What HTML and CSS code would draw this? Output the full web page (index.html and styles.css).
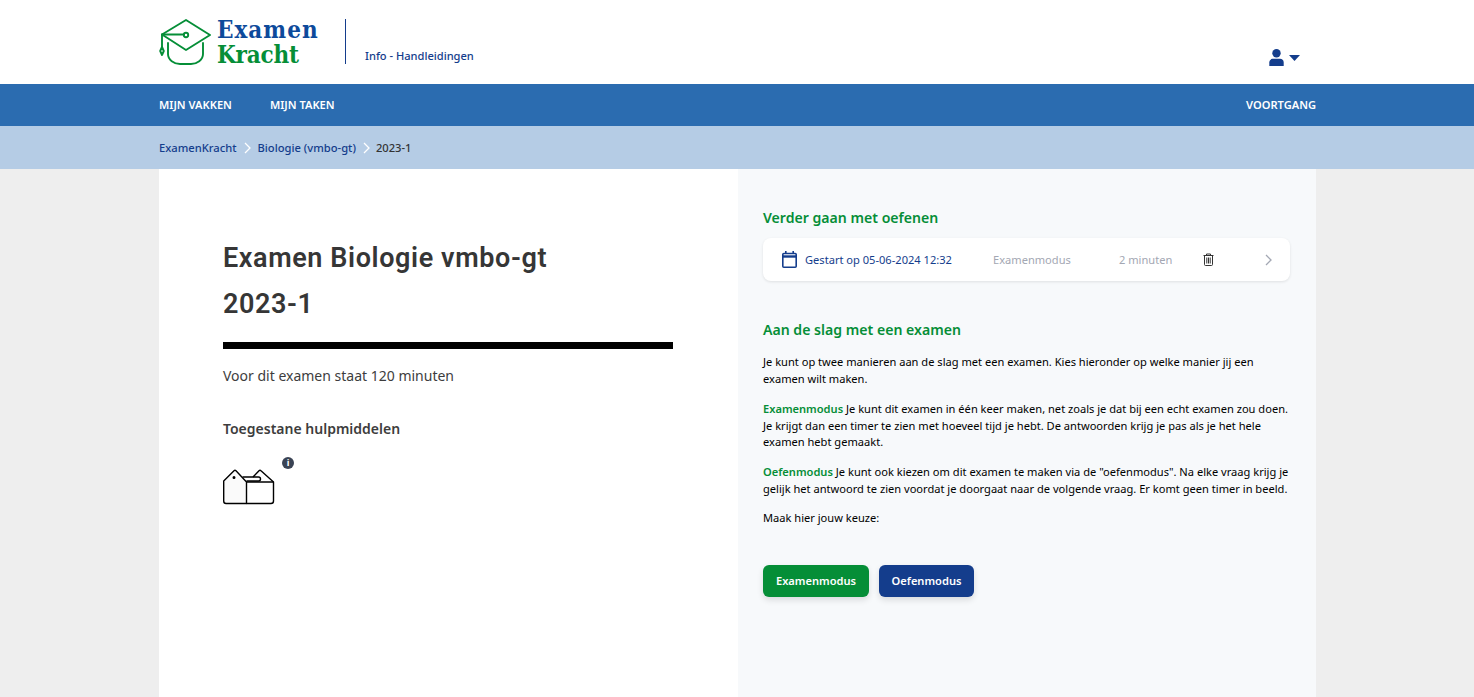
FILE: index.html
```html
<!DOCTYPE html>
<html lang="nl">
<head>
  <meta charset="UTF-8" />
  <meta name="viewport" content="width=device-width, initial-scale=1.0"/>
  <title>ExamenKracht</title>
  <link rel="stylesheet" href="styles.css">
</head>
<body>

  <!-- HEADER -->
  <header class="header">
    <div class="wrap header-inner">
      <a class="logo" href="#">
        <svg class="logo-cap" viewBox="0 0 52 46" width="52" height="46" fill="none" stroke="#058e37" stroke-width="1.900" stroke-linejoin="round" stroke-linecap="round">
          <path d="M27 1 L51 16 L27 31 L3 15.500 Z"/>
          <path d="M3 15.500 H25"/>
          <circle cx="27" cy="16" r="2.200"/>
          <path d="M9 24 V35 C9 41 15 45 21 45 H32 C38 45 44 41 44 35 V24"/>
          <path d="M3 15.500 V28"/>
          <path d="M3 28 L1.200 32 L3 36 L4.800 32 Z"/>
        </svg>
        <span class="logo-text"><span class="logo-top">Examen</span><span class="logo-bottom">Kracht</span></span>
      </a>
      <div class="header-divider"></div>
      <a class="header-link" href="#">Info - Handleidingen</a>
      <div class="user-menu">
        <svg viewBox="0 0 15 17" width="15" height="17" fill="#143d8c">
          <circle cx="7.500" cy="4.300" r="4.200"/>
          <path d="M0.300 17 V13.500 C0.300 11 2 9.800 4 9.800 H11 C13 9.800 14.700 11 14.700 13.500 V17 Z"/>
        </svg>
        <svg viewBox="0 0 11 6" width="11" height="6" fill="#143d8c"><path d="M0 0 H11 L5.500 6 Z"/></svg>
      </div>
    </div>
  </header>

  <!-- NAVIGATION -->
  <nav class="navbar">
    <div class="wrap navbar-inner">
      <a href="#">MIJN VAKKEN</a>
      <a href="#">MIJN TAKEN</a>
      <a class="navbar-right" href="#">VOORTGANG</a>
    </div>
  </nav>

  <!-- BREADCRUMB -->
  <div class="breadcrumb">
    <div class="wrap breadcrumb-inner">
      <a href="#">ExamenKracht</a>
      <svg class="crumb-sep" viewBox="0 0 7 12" width="7" height="12"><path d="M1 1 L6 6 L1 11" fill="none" stroke="#fff" stroke-width="1.300"/></svg>
      <a href="#">Biologie (vmbo-gt)</a>
      <svg class="crumb-sep" viewBox="0 0 7 12" width="7" height="12"><path d="M1 1 L6 6 L1 11" fill="none" stroke="#fff" stroke-width="1.300"/></svg>
      <span>2023-1</span>
    </div>
  </div>

  <!-- MAIN -->
  <main class="wrap content">
    <section class="left">
      <h1>Examen Biologie vmbo-gt<br>2023-1</h1>
      <div class="rule"></div>
      <p class="duration">Voor dit examen staat 120 minuten</p>
      <h2 class="tools-title">Toegestane hulpmiddelen</h2>
      <div class="tools">
        <svg viewBox="0 0 52 36" width="52" height="36" fill="none" stroke="#000" stroke-width="1.400" stroke-linejoin="round">
          <path d="M0.700 12 L11 1.800 Q12 0.800 13 1.800 L23.500 13 V34.500 H3 Q0.700 34.500 0.700 32 Z" fill="#fafafa"/>
          <path d="M23.500 13 H50.500 V32 Q50.500 34.500 48 34.500 H23.500"/>
          <path d="M30 8 L36 1.800 Q37 0.800 38 1.800 L50.500 13"/>
          <path d="M19.500 8 H35.500 Q37.500 8 37.500 10 Q37.500 12 35.500 12 H23.500"/>
          <circle cx="11" cy="8.500" r="0.800" fill="#000"/>
        </svg>
        <span class="info-dot">i</span>
      </div>
    </section>

    <section class="right">
      <h3>Verder gaan met oefenen</h3>
      <div class="session">
        <svg class="session-cal" viewBox="0 0 15 17" width="15" height="17" fill="none" stroke="#143d8c" stroke-width="1.600">
          <rect x="0.800" y="2.500" width="13.400" height="13.700" rx="1"/>
          <path d="M0.800 5.500 H14.200" stroke-width="2.400"/>
          <path d="M3.800 0 V3 M11.200 0 V3"/>
        </svg>
        <span class="session-date">Gestart op 05-06-2024 12:32</span>
        <span class="session-mode">Examenmodus</span>
        <span class="session-time">2 minuten</span>
        <svg class="session-trash" viewBox="0 0 11 13" width="11" height="13" fill="none" stroke="#333" stroke-width="1">
          <path d="M0.500 2.500 H10.500 M3.500 2.500 V1 H7.500 V2.500"/>
          <path d="M1.500 2.500 V11.500 Q1.500 12.500 2.500 12.500 H8.500 Q9.500 12.500 9.500 11.500 V2.500"/>
          <path d="M3.800 4.500 V10.500 M5.500 4.500 V10.500 M7.200 4.500 V10.500"/>
        </svg>
        <svg class="session-arrow" viewBox="0 0 7 12" width="7" height="12"><path d="M1 1 L6 6 L1 11" fill="none" stroke="#a3a7b3" stroke-width="1.300"/></svg>
      </div>

      <h3 class="start-title">Aan de slag met een examen</h3>
      <p>Je kunt op twee manieren aan de slag met een examen. Kies hieronder op welke manier jij een examen wilt maken.</p>
      <p><strong>Examenmodus</strong> Je kunt dit examen in één keer maken, net zoals je dat bij een echt examen zou doen. Je krijgt dan een timer te zien met hoeveel tijd je hebt. De antwoorden krijg je pas als je het hele examen hebt gemaakt.</p>
      <p class="practice"><strong>Oefenmodus</strong> Je kunt ook kiezen om dit examen te maken via de "oefenmodus". Na elke vraag krijg je gelijk het antwoord te zien voordat je doorgaat naar de volgende vraag. Er komt geen timer in beeld.</p>
      <p class="choice">Maak hier jouw keuze:</p>
      <div class="buttons">
        <button class="btn btn-green">Examenmodus</button>
        <button class="btn btn-blue">Oefenmodus</button>
      </div>
    </section>
  </main>

</body>
</html>
```

FILE: styles.css
```css
html, body {
  height: 100%;
}

body {
  margin: 0;
  background-color: #eeeeee;
  font-family: "Noto Sans", "Open Sans", sans-serif;
  color: #000;
  overflow: hidden;
  display: flex;
  flex-direction: column;
}

a {
  text-decoration: none;
  color: inherit;
}

.wrap {
  width: 1157px;
  margin-left: 159px;
}

/* HEADER */
.header {
  background-color: #fff;
  height: 84px;
  flex: none;
}

.header-inner {
  display: flex;
  height: 100%;
}

.logo {
  display: flex;
  align-items: flex-start;
  gap: 6px;
  padding-top: 17px;
  width: 186px;
}

.logo-cap {
  margin-top: 2px;
}

.logo-text {
  display: flex;
  flex-direction: column;
  font-family: "DejaVu Serif Condensed", "DejaVu Serif", serif;
  font-stretch: condensed;
  font-weight: 700;
  font-size: 24px;
  line-height: 25px;
}

.logo-top {
  color: #0d4a9b;
  letter-spacing: 1px;
}

.logo-bottom {
  color: #058e37;
  letter-spacing: -0.2px;
}

.header-divider {
  width: 1px;
  height: 45px;
  margin-top: 19px;
  background-color: #143d8c;
}

.header-link {
  margin: 48px 0 0 19px;
  font-size: 11.1px;
  line-height: 15px;
  font-weight: 500;
  color: #143d8c;
}

.user-menu {
  margin: 49px 16px 0 auto;
  display: flex;
  align-items: center;
  align-self: flex-start;
  gap: 5px;
}

/* NAVIGATION */
.navbar {
  background-color: #2b6cb0;
  height: 42px;
  flex: none;
}

.navbar-inner {
  display: flex;
  align-items: center;
  gap: 38px;
  height: 100%;
  padding-bottom: 2px;
  box-sizing: border-box;
}

.navbar a {
  color: #fff;
  font-size: 11.1px;
  font-weight: 600;
}

.navbar .navbar-right {
  margin-left: auto;
}

/* BREADCRUMB */
.breadcrumb {
  background-color: #b5cce5;
  height: 43px;
  flex: none;
}

.breadcrumb-inner {
  display: flex;
  align-items: center;
  gap: 7px;
  height: 100%;
  font-size: 11.2px;
  font-weight: 500;
  color: #333;
}

.breadcrumb span {
  margin-left: -1px;
}

.breadcrumb a {
  color: #143d8c;
}

/* MAIN */
.content {
  display: flex;
  flex: 1;
  min-height: 0;
}

.left {
  width: 579px;
  box-sizing: border-box;
  background-color: #fff;
  padding: 66px 65px 0 64px;
}

h1 {
  margin: 0;
  font-family: Roboto, sans-serif;
  font-size: 27px;
  line-height: 46px;
  font-weight: 600;
  letter-spacing: 0.6px;
  color: #363636;
}

.rule {
  height: 7px;
  margin-top: 15px;
  background-color: #000;
}

.duration {
  margin: 17px 0 0;
  font-size: 14px;
  line-height: 20px;
  color: #3d3d3d;
}

.tools-title {
  margin: 33px 0 0;
  font-size: 14px;
  line-height: 20px;
  font-weight: 600;
  color: #3d3d3d;
}

.tools {
  display: flex;
  align-items: flex-start;
  margin-top: 18px;
}

.tools svg {
  margin-top: 12px;
}

.info-dot {
  width: 12px;
  height: 12px;
  margin-left: 7px;
  border-radius: 50%;
  background-color: #3a4354;
  color: #fff;
  font-size: 9px;
  line-height: 12px;
  font-weight: 700;
  text-align: center;
}

.right {
  flex: 1;
  background-color: #f7f9fb;
  padding: 39px 26px 0 25px;
}

h3 {
  margin: 0;
  font-size: 14.1px;
  line-height: 20px;
  font-weight: 600;
  color: #058e37;
}

.session {
  display: flex;
  align-items: center;
  height: 43px;
  margin-top: 10px;
  padding: 0 18px 0 19px;
  background-color: #fff;
  border-radius: 8px;
  box-shadow: 0 1px 3px rgba(0, 0, 0, 0.1);
  font-size: 11.1px;
}

.session-date {
  width: 188px;
  margin-left: 8px;
  color: #143d8c;
}

.session-mode {
  width: 126px;
  color: #a3a7b3;
}

.session-time {
  width: 84px;
  color: #a3a7b3;
}

.session-arrow {
  margin-left: auto;
}

.start-title {
  margin-top: 39px;
}

.right p {
  margin: 14px 0 0;
  font-size: 11.1px;
  line-height: 16.5px;
}

.right h3 + p {
  margin-top: 14px;
}

.right .practice {
  margin-top: 13.5px;
}

.right .choice {
  margin-top: 12.5px;
}

.right strong {
  font-weight: 600;
  color: #058e37;
}

.buttons {
  display: flex;
  gap: 10px;
  margin-top: 39px;
}

.btn {
  height: 32px;
  width: 106px;
  padding: 0 0 2px;
  border: none;
  border-radius: 6px;
  color: #fff;
  font-family: inherit;
  font-size: 11.1px;
  font-weight: 600;
  box-shadow: 0 3px 6px rgba(0, 0, 0, 0.12);
  cursor: pointer;
}

.btn-green {
  background-color: #058e37;
}

.btn-blue {
  width: 95px;
  background-color: #143d8c;
}
```
